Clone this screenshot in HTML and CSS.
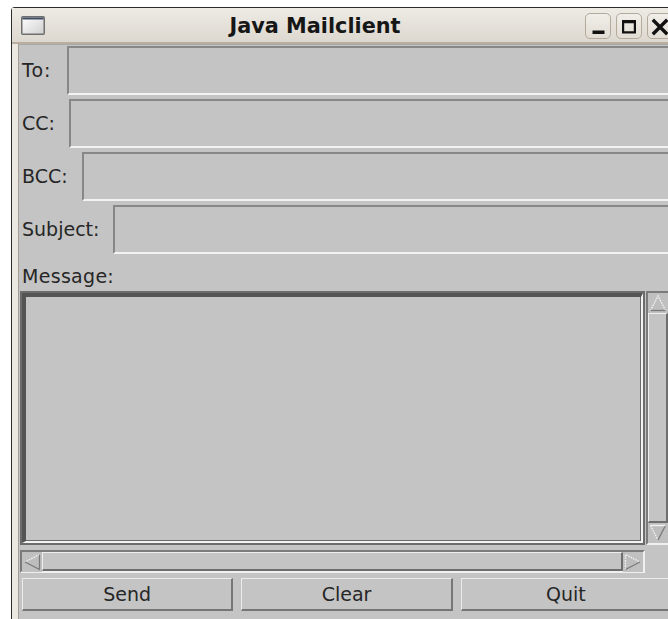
FILE: index.html
```html
<!DOCTYPE html>
<html lang="en">
<head>
<meta charset="utf-8">
<title>Java Mailclient</title>
<link rel="stylesheet" href="styles.css">
</head>
<body>
<div class="window">
  <div class="titlebar">
    <span class="win-icon">
      <svg width="24" height="19" viewBox="0 0 24 19">
        <defs>
          <linearGradient id="iconFill" x1="0" y1="0" x2="1" y2="1">
            <stop offset="0" stop-color="#ffffff"/>
            <stop offset="1" stop-color="#cfcfcf"/>
          </linearGradient>
        </defs>
        <rect x="0.75" y="0.75" width="22.5" height="17.5" rx="1" fill="url(#iconFill)" stroke="#6f6f6f" stroke-width="1.5"/>
        <rect x="1.5" y="1.5" width="21" height="2" fill="#3e4f66"/>
      </svg>
    </span>
    <span class="title">Java Mailclient</span>
    <div class="wm-buttons">
      <span class="wm-btn">
        <svg width="26" height="26" viewBox="0 0 26 26"><rect x="7.5" y="17.5" width="12" height="3.5" fill="#111"/></svg>
      </span>
      <span class="wm-btn">
        <svg width="26" height="26" viewBox="0 0 26 26"><path d="M6 7h14v13.5h-14z M8.2 10.2v8.1h9.6v-8.1z" fill="#111" fill-rule="evenodd"/></svg>
      </span>
      <span class="wm-btn">
        <svg width="26" height="26" viewBox="0 0 26 26"><path d="M7 8l12 12M19 8l-12 12" stroke="#111" stroke-width="3.4" stroke-linecap="square"/></svg>
      </span>
    </div>
  </div>

  <div class="client">
    <div class="row"><span class="lbl lbl-to">To:</span><div class="field"></div></div>
    <div class="row"><span class="lbl">CC:</span><div class="field"></div></div>
    <div class="row"><span class="lbl">BCC:</span><div class="field"></div></div>
    <div class="row"><span class="lbl">Subject:</span><div class="field"></div></div>

    <div class="msg-label">Message:</div>

    <div class="scroll-pane">
      <div class="text-area"><div class="ta-inner"></div></div>

      <div class="vscroll">
        <span class="arrow">
          <svg width="20" height="20" viewBox="0 0 20 20">
            <path d="M10 3L17.5 17.5H2.5z" fill="#bdbdbd"/>
            <path d="M2.5 17.5L10 3L17.5 17.5" fill="none" stroke="#f4f4f4" stroke-width="1.3" stroke-dasharray="1.6 1"/>
            <path d="M2.5 17.5H17.5" stroke="#7a7a7a" stroke-width="1.3"/>
          </svg>
        </span>
        <span class="thumb"></span>
        <span class="arrow">
          <svg width="20" height="20" viewBox="0 0 20 20">
            <path d="M2.5 2.5H17.5L10 17z" fill="#bdbdbd"/>
            <path d="M2.5 2.5L10 17" fill="none" stroke="#f4f4f4" stroke-width="1.3" stroke-dasharray="1.6 1"/>
            <path d="M10 17L17.5 2.5" fill="none" stroke="#7a7a7a" stroke-width="1.3"/>
            <path d="M2.5 2.5H17.5" stroke="#f4f4f4" stroke-width="1.3"/>
          </svg>
        </span>
      </div>

      <div class="hscroll">
        <span class="arrow">
          <svg width="20" height="20" viewBox="0 0 20 20">
            <path d="M3 10L17.5 2.5V17.5z" fill="#bdbdbd"/>
            <path d="M17.5 2.5L3 10" fill="none" stroke="#f4f4f4" stroke-width="1.3" stroke-dasharray="1.6 1"/>
            <path d="M3 10L17.5 17.5V2.5" fill="none" stroke="#7a7a7a" stroke-width="1.3"/>
          </svg>
        </span>
        <span class="thumb"></span>
        <span class="arrow">
          <svg width="20" height="20" viewBox="0 0 20 20">
            <path d="M17 10L2.5 2.5V17.5z" fill="#bdbdbd"/>
            <path d="M2.5 17.5V2.5L17 10" fill="none" stroke="#f4f4f4" stroke-width="1.3" stroke-dasharray="1.6 1"/>
            <path d="M17 10L2.5 17.5" fill="none" stroke="#7a7a7a" stroke-width="1.3"/>
          </svg>
        </span>
      </div>
    </div>

    <div class="buttons">
      <button class="btn" type="button">Send</button>
      <button class="btn" type="button">Clear</button>
      <button class="btn" type="button">Quit</button>
    </div>
  </div>
</div>
</body>
</html>
```

FILE: styles.css
```css
html, body {
  margin: 0;
  padding: 0;
  overflow: hidden;
  background: #ffffff;
}

body {
  width: 668px;
  height: 619px;
  font-family: "DejaVu Sans", "Liberation Sans", sans-serif;
}

/* Window frame */
.window {
  box-sizing: border-box;
  margin: 7px 0 0 11px;
  width: 668px;
  height: 620px;
  border-top: 1px solid #2c2c2c;
  border-left: 1px solid #2c2c2c;
  border-top-left-radius: 4px;
  background: #ebe8e1;
  display: flex;
  flex-direction: column;
}

.titlebar {
  flex: none;
  height: 34px;
  border-bottom: 2px solid #b9afa1;
  background: linear-gradient(#eeebe5, #ddd8cf);
  display: flex;
  align-items: center;
  padding-left: 9px;
}

.win-icon {
  display: flex;
  width: 24px;
  height: 19px;
}

.title {
  flex: 1;
  text-align: center;
  font-weight: bold;
  font-size: 20.8px;
  line-height: 24px;
  padding-top: 2px;
  color: #161616;
}

.wm-buttons {
  display: flex;
  gap: 5px;
  margin-right: 6px;
  margin-top: 1px;
}

.wm-btn {
  box-sizing: border-box;
  width: 26px;
  height: 26px;
  border: 1px solid #b4aa9b;
  border-radius: 5px;
  background: linear-gradient(#f1eee9, #e2ddd4);
  display: flex;
  align-items: center;
  justify-content: center;
  overflow: hidden;
}

.wm-btn svg {
  display: block;
  margin: -1px;
}

/* Client area */
.client {
  flex: 1;
  margin: 0 4px 5px 6px;
  border-left: 1px solid #a29e96;
  border-top: 1px solid #a9a9a9;
  background: #c4c4c4;
  padding: 1px 0 3px 0;
  display: flex;
  flex-direction: column;
  font-size: 19px;
  color: #262626;
}

.row {
  display: flex;
  align-items: center;
  height: 49px;
  margin-bottom: 4px;
}

.row:nth-child(4) {
  margin-bottom: 0;
}

.lbl {
  margin: 0 14px 0 3px;
  line-height: 23px;
}

.lbl-to {
  margin-right: 16px;
  letter-spacing: 1px;
}

.field {
  flex: 1;
  box-sizing: border-box;
  height: 49px;
  margin-right: 3px;
  border-style: solid;
  border-width: 2px;
  border-color: #878787 #f3f3f3 #f3f3f3 #878787;
  background: #c4c4c4;
}

.msg-label {
  box-sizing: border-box;
  height: 37px;
  padding: 11px 0 0 3px;
  line-height: 23px;
  letter-spacing: 0.3px;
}

/* Message text area with its scroll bars */
.scroll-pane {
  margin-left: 1px;
  display: grid;
  grid-template-columns: 625px 24px;
  grid-template-rows: 254px 23px;
  column-gap: 1px;
  row-gap: 5px;
}

.text-area {
  box-sizing: border-box;
  border: 2px solid #6c6c6c;
}

.ta-inner {
  box-sizing: border-box;
  height: 100%;
  border-style: solid;
  border-width: 4px 2px 2px 4px;
  border-color: #545454 #f3f3f3 #f3f3f3 #545454;
  box-shadow: inset -1px -1px 0 #6a6a6a;
  background: #c4c4c4;
}

.vscroll,
.hscroll {
  box-sizing: border-box;
  display: flex;
  border-style: solid;
  border-width: 2px;
  border-color: #7b7b7b #f0f0f0 #f0f0f0 #7b7b7b;
  background: #c4c4c4;
}

.vscroll {
  flex-direction: column;
}

.arrow {
  flex: none;
  display: flex;
  width: 20px;
  height: 20px;
  background: #c0c0c0;
}

.thumb {
  flex: 1;
  box-sizing: border-box;
  border-style: solid;
  border-width: 1px 2px 2px 1px;
  border-color: #eeeeee #6e6e6e #6e6e6e #eeeeee;
  background: #c4c4c4;
}

/* Button row */
.buttons {
  display: grid;
  grid-template-columns: repeat(3, 1fr);
  column-gap: 8px;
  margin-top: 5px;
  padding: 0 3px;
}

.btn {
  box-sizing: border-box;
  height: 33px;
  margin: 0;
  padding: 0;
  border-style: solid;
  border-width: 1px 2px 2px 1px;
  border-color: #ececec #767676 #767676 #ececec;
  background: #c4c4c4;
  font-family: "DejaVu Sans", "Liberation Sans", sans-serif;
  font-size: 19px;
  color: #262626;
}
```
